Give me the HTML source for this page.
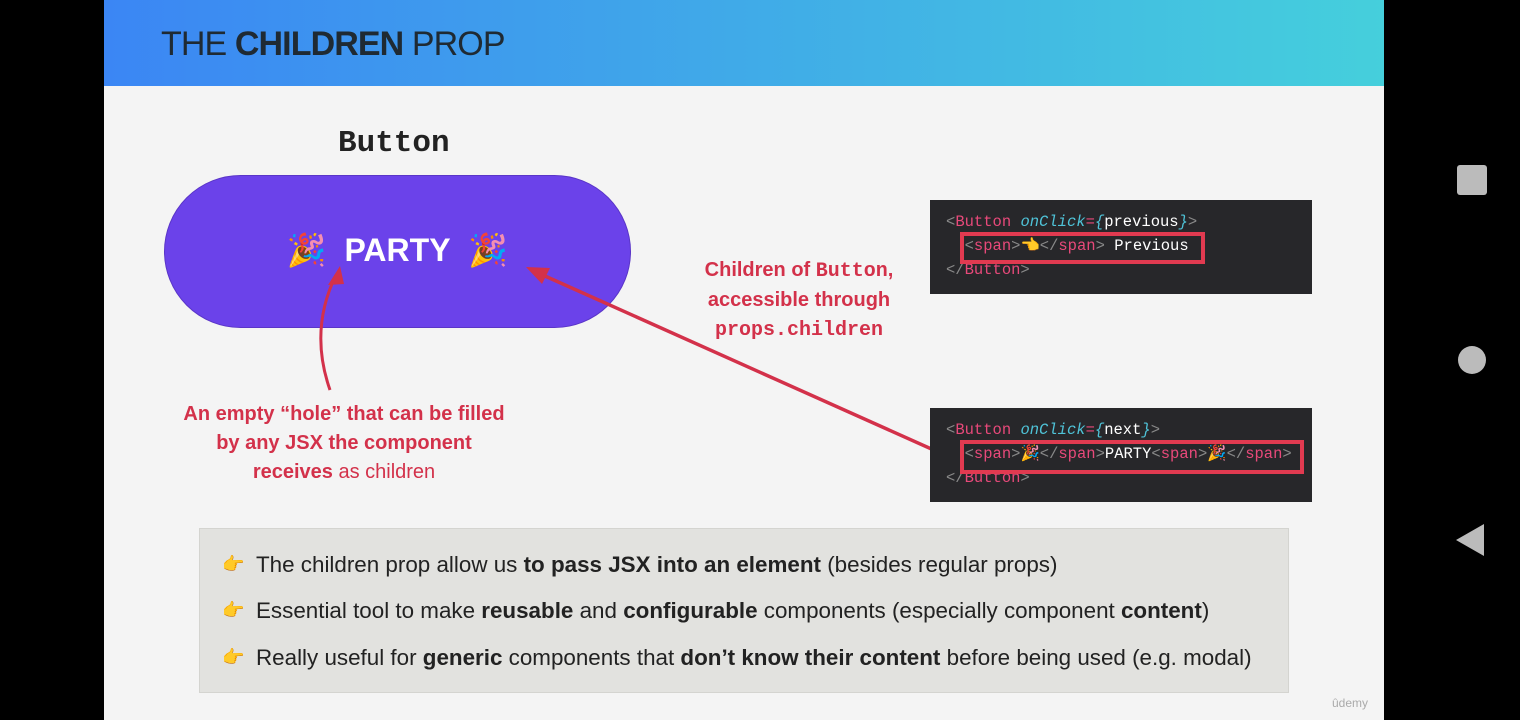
<!DOCTYPE html>
<html><head><meta charset="utf-8"><style>
*{margin:0;padding:0;box-sizing:border-box}
body{width:1520px;height:720px;background:#000;position:relative;overflow:hidden;font-family:"Liberation Sans",sans-serif}
.slide{position:absolute;left:104px;top:0;width:1280px;height:720px;background:#f4f4f4}
.hdr{position:absolute;left:0;top:0;width:1280px;height:86px;background:linear-gradient(90deg,#3b86f4,#45cfdc)}
.hdr h1{position:absolute;left:57px;top:25px;font-size:34px;font-weight:400;color:#1f2a33;letter-spacing:-0.9px}
.mono{font-family:"Liberation Mono",monospace}
.btnlbl{position:absolute;left:234px;top:126px;font-size:31px;font-weight:700;color:#222}
.pill{position:absolute;left:60px;top:175px;width:467px;height:153px;border-radius:77px;background:#6b42ea;border:1px solid #5a35c8}
.pill span{position:absolute;left:0;right:0;top:55px;text-align:center;font-size:32px;font-weight:700;color:#fff}
.ann1{position:absolute;left:40px;top:400px;width:400px;text-align:center;font-size:20px;line-height:29px;color:#d3314a}
.ann2{position:absolute;left:585px;top:256px;width:220px;text-align:center;font-size:20px;line-height:29px;color:#d3314a;font-weight:700}
.code{position:absolute;left:826px;width:382px;height:94px;background:#27272a;font-family:"Liberation Mono",monospace;font-size:15.5px;line-height:24px;color:#ddd;padding:10px 0 0 16px;white-space:pre}
.p{color:#e8497a}.g{color:#888}.c{color:#4fc3d8;font-style:italic}.w{color:#fff}
.box{position:absolute;border:4px solid #e13a50}
.bul{position:absolute;left:95px;top:528px;width:1090px;height:165px;background:#e2e2df;border:1px solid #d4d4d0}
.bul p{position:absolute;left:56px;font-size:22.4px;color:#222;white-space:nowrap}
.bul i{position:absolute;left:-34px;top:2px;font-style:normal;font-size:18px;color:#e9a825}
.nav{position:absolute;background:#bbb}
</style></head><body>
<div class="slide">
<div class="hdr"><h1>THE <b>CHILDREN</b> PROP</h1></div>
<div class="btnlbl mono">Button</div>
<div class="pill"><span>🎉 &nbsp;PARTY&nbsp; 🎉</span></div>
<svg style="position:absolute;left:0;top:0" width="1280" height="720">
<path d="M226 390 Q205 330 232 275" stroke="#d3314a" stroke-width="3" fill="none"/>
<polygon points="236,266 224,285 240,284" fill="#d3314a"/>
<line x1="852" y1="460" x2="432" y2="272" stroke="#d3314a" stroke-width="3.5"/>
<polygon points="422,267 446,268 438,284" fill="#d3314a"/>
</svg>
<div class="ann1"><b>An empty “hole” that can be filled</b><br><b>by any JSX the component</b><br><b>receives</b> as children</div>
<div class="ann2">Children of <span class="mono">Button</span>,<br>accessible through<br><span class="mono">props.children</span></div>
<div class="code" style="top:200px"><span class="g">&lt;</span><span class="p">Button</span> <span class="c">onClick</span><span class="p">=</span><span class="c">{</span><span class="w">previous</span><span class="c">}</span><span class="g">&gt;</span>
  <span class="g">&lt;</span><span class="p">span</span><span class="g">&gt;</span>👈<span class="g">&lt;/</span><span class="p">span</span><span class="g">&gt;</span> <span class="w">Previous</span>
<span class="g">&lt;/</span><span class="p">Button</span><span class="g">&gt;</span></div>
<div class="box" style="left:856px;top:232px;width:245px;height:32px"></div>
<div class="code" style="top:408px"><span class="g">&lt;</span><span class="p">Button</span> <span class="c">onClick</span><span class="p">=</span><span class="c">{</span><span class="w">next</span><span class="c">}</span><span class="g">&gt;</span>
  <span class="g">&lt;</span><span class="p">span</span><span class="g">&gt;</span>🎉<span class="g">&lt;/</span><span class="p">span</span><span class="g">&gt;</span><span class="w">PARTY</span><span class="g">&lt;</span><span class="p">span</span><span class="g">&gt;</span>🎉<span class="g">&lt;/</span><span class="p">span</span><span class="g">&gt;</span>
<span class="g">&lt;/</span><span class="p">Button</span><span class="g">&gt;</span></div>
<div class="box" style="left:856px;top:440px;width:344px;height:34px"></div>
<div class="bul">
<p style="top:23px"><i>👉</i>The children prop allow us <b>to pass JSX into an element</b> (besides regular props)</p>
<p style="top:69px"><i>👉</i>Essential tool to make <b>reusable</b> and <b>configurable</b> components (especially component <b>content</b>)</p>
<p style="top:116px"><i>👉</i>Really useful for <b>generic</b> components that <b>don’t know their content</b> before being used (e.g. modal)</p>
</div>
<div style="position:absolute;left:1228px;top:696px;font-size:12px;color:#aaa">ûdemy</div>
</div>
<div class="nav" style="left:1457px;top:165px;width:30px;height:30px;border-radius:3px"></div>
<div class="nav" style="left:1458px;top:346px;width:28px;height:28px;border-radius:50%"></div>
<div style="position:absolute;left:1456px;top:524px;width:0;height:0;border-top:16px solid transparent;border-bottom:16px solid transparent;border-right:28px solid #bbb"></div>
</body></html>
